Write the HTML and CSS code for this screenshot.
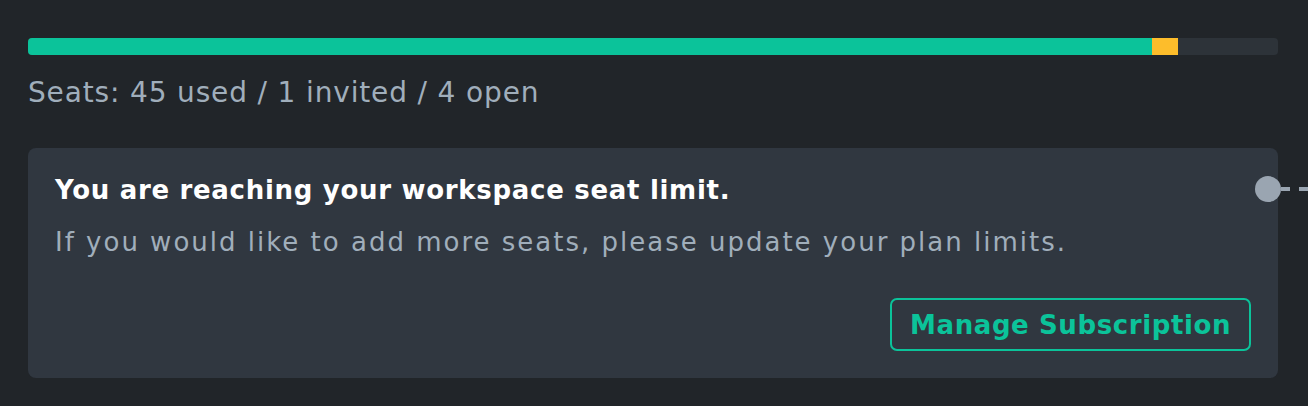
FILE: index.html
```html
<!DOCTYPE html>
<html>
<head>
<meta charset="utf-8">
<link rel="stylesheet" href="styles.css">
</head>
<body>
<div class="page">
  <div class="bar">
    <div class="bar-used" style="width:89.9%"></div>
    <div class="bar-invited" style="width:2.1%"></div>
  </div>
  <div class="seats">Seats: 45 used / 1 invited / 4 open</div>
  <div class="card">
    <div class="title">You are reaching your workspace seat limit.</div>
    <div class="desc">If you would like to add more seats, please update your plan limits.</div>
    <div class="actions">
      <button class="btn">Manage Subscription</button>
    </div>
    <div class="connector">
      <span class="dot"></span>
      <span class="dash"></span>
    </div>
  </div>
</div>
</body>
</html>
```
FILE: styles.css
```css
html, body {
  margin: 0;
  padding: 0;
  background: #212529;
  overflow: hidden;
}
.page {
  width: 1250px;
  padding: 38px 30px 0 28px;
  font-family: "DejaVu Sans", "Open Sans", sans-serif;
}
.bar {
  height: 17px;
  border-radius: 4px;
  background: #2d3339;
  display: flex;
  overflow: hidden;
}
.bar-used { background: #0bc39a; }
.bar-invited { background: #fdbd2b; }
.seats {
  margin-top: 20px;
  font-size: 28px;
  line-height: 36px;
  letter-spacing: 0.85px;
  color: #a0aebb;
}
.card {
  position: relative;
  margin-top: 37px;
  background: #303740;
  border-radius: 8px;
  padding: 24px 27px 27px 27px;
}
.title {
  font-size: 26px;
  line-height: 36px;
  font-weight: 700;
  letter-spacing: 0.7px;
  color: #ffffff;
}
.desc {
  margin-top: 16px;
  font-size: 26px;
  line-height: 36px;
  letter-spacing: 2px;
  color: #a0aebb;
}
.actions {
  display: flex;
  justify-content: flex-end;
  margin-top: 38px;
}
.btn {
  font-family: inherit;
  font-size: 26px;
  font-weight: 700;
  letter-spacing: 0.6px;
  color: #0bc39a;
  background: transparent;
  border: 2px solid #0bc39a;
  border-radius: 7px;
  height: 53px;
  padding: 0 18px;
}
.connector {
  position: absolute;
  top: 28px;
  left: 1227px;
  display: flex;
  align-items: center;
}
.dot {
  width: 26px;
  height: 26px;
  border-radius: 50%;
  background: #9aa5b1;
}
.dash {
  width: 40px;
  height: 4px;
  background: repeating-linear-gradient(90deg, #9aa5b1 0 9px, transparent 9px 18px);
}
```
